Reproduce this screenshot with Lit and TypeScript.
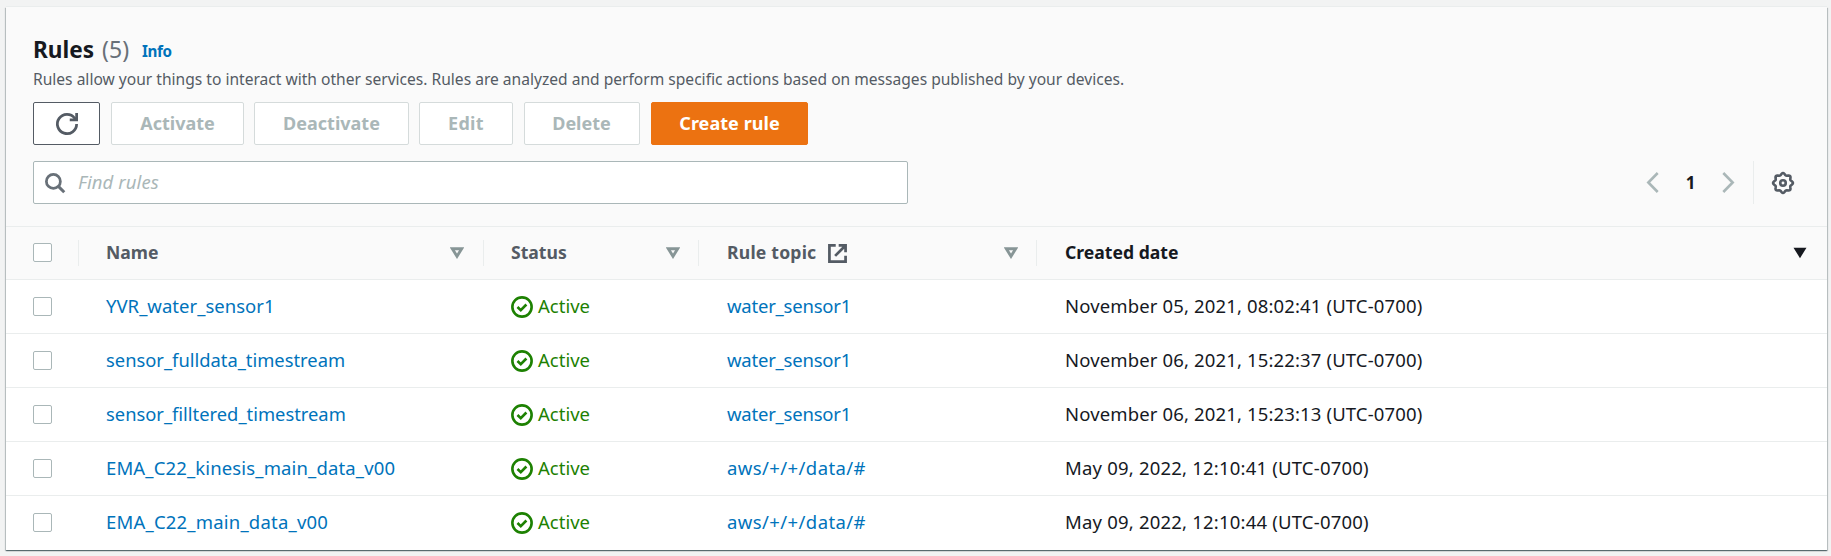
import { LitElement, html, css, svg } from "lit";
import { customElement, property } from "lit/decorators.js";

interface Rule { name: string; nameFit: string; topic: string; topicFit: string; created: string; dateFit: string; }

const RULES: Rule[] = [
  { name: "YVR_water_sensor1", nameFit: "b", topic: "water_sensor1", topicFit: "c", created: "November 05, 2021, 08:02:41 (UTC-0700)", dateFit: "d" },
  { name: "sensor_fulldata_timestream", nameFit: "a", topic: "water_sensor1", topicFit: "c", created: "November 06, 2021, 15:22:37 (UTC-0700)", dateFit: "d" },
  { name: "sensor_filltered_timestream", nameFit: "a", topic: "water_sensor1", topicFit: "c", created: "November 06, 2021, 15:23:13 (UTC-0700)", dateFit: "d" },
  { name: "EMA_C22_kinesis_main_data_v00", nameFit: "d", topic: "aws/+/+/data/#", topicFit: "f", created: "May 09, 2022, 12:10:41 (UTC-0700)", dateFit: "e" },
  { name: "EMA_C22_main_data_v00", nameFit: "e", topic: "aws/+/+/data/#", topicFit: "f", created: "May 09, 2022, 12:10:44 (UTC-0700)", dateFit: "e" },
];

// Closed outline with eight rounded teeth around the centre of a 16-unit box.
const GEAR_RIM = "M" + Array.from({ length: 96 }, (_, i) => {
  const t = (i / 96) * Math.PI * 2;
  const r = 6.5 + 0.7 * Math.cos(8 * t);
  return `${(8 + r * Math.cos(t)).toFixed(2)} ${(8 + r * Math.sin(t)).toFixed(2)}`;
}).join("L") + "z";

const SHAPES: Record<string, unknown> = {
  refresh: svg`<path d="M15 8A7 7 0 1 1 13.600 3.800L14.600 5"/><path d="M10 5h5V0"/>`,
  search: svg`<circle cx="6.700" cy="6.700" r="5.600" stroke-width="2.200"/><path d="M10.700 10.700L15.400 15.400" stroke-width="2.400"/>`,
  prev: svg`<path d="M9 .7L1.800 8 9 15.300"/>`,
  next: svg`<path d="M1 .7L8.200 8 1 15.300"/>`,
  gear: svg`<path d=${GEAR_RIM} stroke-width="1.900"/><circle cx="8" cy="8" r="2" stroke-width="1.900"/>`,
  external: svg`<path d="M6.500 1.200H1.200v13.600h13.600V9.800" stroke-width="2.300"/><path d="M9 1.200h5.800V7M14.300 1.700L6 10" stroke-width="2.300"/>`,
  check: svg`<circle cx="8" cy="8" r="7" stroke-width="1.900"/><path d="M4.700 8l2.400 2.300 4.100-4.100" stroke-width="1.900"/>`,
};

@customElement("ui-icon")
class UiIcon extends LitElement {
  @property() name = "";
  static styles = css`
    :host { display: block; flex: none; }
    svg { display: block; width: 100%; height: 100%; fill: none; stroke: currentColor; stroke-width: 2; overflow: visible; }
  `;
  render() {
    const narrow = this.name === "prev" || this.name === "next";
    return html`<svg viewBox=${narrow ? "0 0 10 16" : "0 0 16 16"}>${SHAPES[this.name]}</svg>`;
  }
}

@customElement("app-root")
class AppRoot extends LitElement {
  static styles = css`
    :host { display: block; box-sizing: border-box; height: 556px; padding: 7px 4px 6px 6px; background: #f2f3f3;
      font: 18.5px/24px "Noto Sans", sans-serif; color: #16191f; overflow: hidden; }
    * { box-sizing: border-box; }
    .panel { height: 543px; width: 1821px; background: #fff; box-shadow: 0 1px 1px 0 rgba(0,28,36,.45), 1px 1px 1px 0 rgba(0,28,36,.18), -1px 1px 1px 0 rgba(0,28,36,.18), 0 -1px 0 #eaeded; white-space: nowrap; }
    .head { height: 220px; padding: 26px 33px 0 27px; background: #fafafa; border-bottom: 1px solid #eaeded; }
    .title { display: flex; align-items: baseline; height: 32px; line-height: 32px; }
    h2 { margin: 0; font-size: 22.600px; font-weight: 700; line-height: 32px; }
    .count { font-size: 23px; color: #687078; margin-left: 8px; }
    .info { font-size: 15.200px; line-height: 28px; font-weight: 700; letter-spacing: -.4px; color: #0073bb; margin-left: 13px; align-self: flex-start; padding-top: 4px; }
    .desc { margin: 2px 0 0; height: 24px; line-height: 24px; font-size: 15.590px; color: #545b64; }
    .actions { display: flex; margin-top: 11px; height: 43px; }
    button { font: 700 18px/24px "Noto Sans", sans-serif; height: 43px; padding: 0 0 2px 0; margin: 0 10px 0 0; background: #fff; color: #aab7b8; border: 1px solid #d5dbdb; border-radius: 2px; }
    .refresh { width: 67px; margin-right: 11px; padding: 0; border-color: #545b64; color: #545b64; display: grid; place-items: center; }
    .w1 { width: 133px; } .w2 { width: 155px; } .w3 { width: 94px; letter-spacing: .3px; margin-right: 11px; } .w4 { width: 116px; margin-right: 11px; padding-right: 1px; }
    .primary { width: 157px; background: #ec7211; border-color: #ec7211; color: #fff; letter-spacing: .05px; }
    .i22 { width: 22px; height: 22px; }
    .tools { display: flex; justify-content: space-between; margin-top: 16px; height: 43px; }
    .search { display: flex; align-items: center; width: 875px; border: 1px solid #aab7b8; border-radius: 2px; background: #fff; padding-left: 11px; color: #687078; }
    .search ui-icon { width: 20px; height: 20px; }
    .search span { margin-left: 13px; padding-bottom: 2px; font-style: italic; letter-spacing: .1px; color: #aab7b8; }
    .pager { display: flex; align-items: center; color: #aab7b8; }
    .chev { width: 13px; height: 21px; }
    .page { width: 63px; text-align: center; font-weight: 700; font-size: 17px; color: #16191f; }
    .gear { height: 43px; margin-left: 18px; border-left: 1px solid #eaeded; padding: 0 0 0 18px; display: flex; align-items: center; color: #545b64; }
    .row { display: grid; grid-template-columns: 72px 405px 215px 338px 1fr; height: 54px; border-bottom: 1px solid #eaeded; align-items: center; }
    .row:last-child { border-bottom: 0; }
    .row.th { height: 53px; background: #fafafa; font-weight: 700; font-size: 17.600px; color: #545b64; }
    .check { display: block; width: 19px; height: 19px; margin: 0 0 1px 27px; border: 1px solid #aab7b8; border-radius: 2px; background: #fff; }
    .cell { display: flex; align-items: center; padding-left: 28px; height: 26px; }
    .cell span { padding-bottom: 2px; }
    .cell.wide { padding-left: 29px; }
    .th .cell { border-left: 1px solid #eaeded; padding-right: 19px; padding-left: 27px; }
    .th .cell.topic { padding-left: 28px; padding-right: 18px; }
    .th .cell.status { padding-right: 18px; }
    .th .sort { margin-left: auto; width: 14px; height: 12px; flex: none; }
    .sort path { fill: none; stroke: #879596; stroke-width: 2.900; }
    .sort.on path { fill: #16191f; stroke: #16191f; stroke-width: 2; }
    .th .cell.created { color: #16191f; padding-left: 28px; padding-right: 20px; }
    .ext { width: 19px; height: 19px; margin-left: 12px; }
    .rt { letter-spacing: .2px; }
    .link { color: #0073bb; }
    .ok { color: #1d8102; padding-left: 27.500px; }
    .ok span { margin-left: 5.500px; }
    .a { font-size: 18.350px; } .b { letter-spacing: .02px; } .c { letter-spacing: -.22px; } .d { letter-spacing: .14px; } .e { letter-spacing: .2px; } .f { letter-spacing: .41px; }
  `;

  private sort(on = false) {
    return html`<svg class="sort ${on ? "on" : ""}" viewBox="0 0 14 12"><path d="M2.300 1.700h9.400L7 9.300z"></path></svg>`;
  }

  render() {
    return html`
      <div class="panel">
        <div class="head">
          <div class="title"><h2>Rules</h2><span class="count">(5)</span><span class="info">Info</span></div>
          <p class="desc">Rules allow your things to interact with other services. Rules are analyzed and perform specific actions based on messages published by your devices.</p>
          <div class="actions">
            <button class="refresh"><ui-icon class="i22" name="refresh"></ui-icon></button>
            <button class="w1">Activate</button><button class="w2">Deactivate</button><button class="w3">Edit</button><button class="w4">Delete</button><button class="primary">Create rule</button>
          </div>
          <div class="tools">
            <div class="search"><ui-icon name="search"></ui-icon><span>Find rules</span></div>
            <div class="pager">
              <ui-icon class="chev" name="prev"></ui-icon><span class="page">1</span><ui-icon class="chev" name="next"></ui-icon>
              <div class="gear"><ui-icon class="i22" name="gear"></ui-icon></div>
            </div>
          </div>
        </div>
        <div class="row th">
          <span class="check"></span>
          <div class="cell"><span>Name</span>${this.sort()}</div>
          <div class="cell status"><span>Status</span>${this.sort()}</div>
          <div class="cell topic"><span class="rt">Rule topic</span><ui-icon class="ext" name="external"></ui-icon>${this.sort()}</div>
          <div class="cell created"><span>Created date</span>${this.sort(true)}</div>
        </div>
        ${RULES.map(r => html`
          <div class="row">
            <span class="check"></span>
            <div class="cell link"><span class=${r.nameFit}>${r.name}</span></div>
            <div class="cell ok"><ui-icon class="i22" name="check"></ui-icon><span>Active</span></div>
            <div class="cell link wide"><span class=${r.topicFit}>${r.topic}</span></div>
            <div class="cell wide"><span class=${r.dateFit}>${r.created}</span></div>
          </div>`)}
      </div>`;
  }
}
